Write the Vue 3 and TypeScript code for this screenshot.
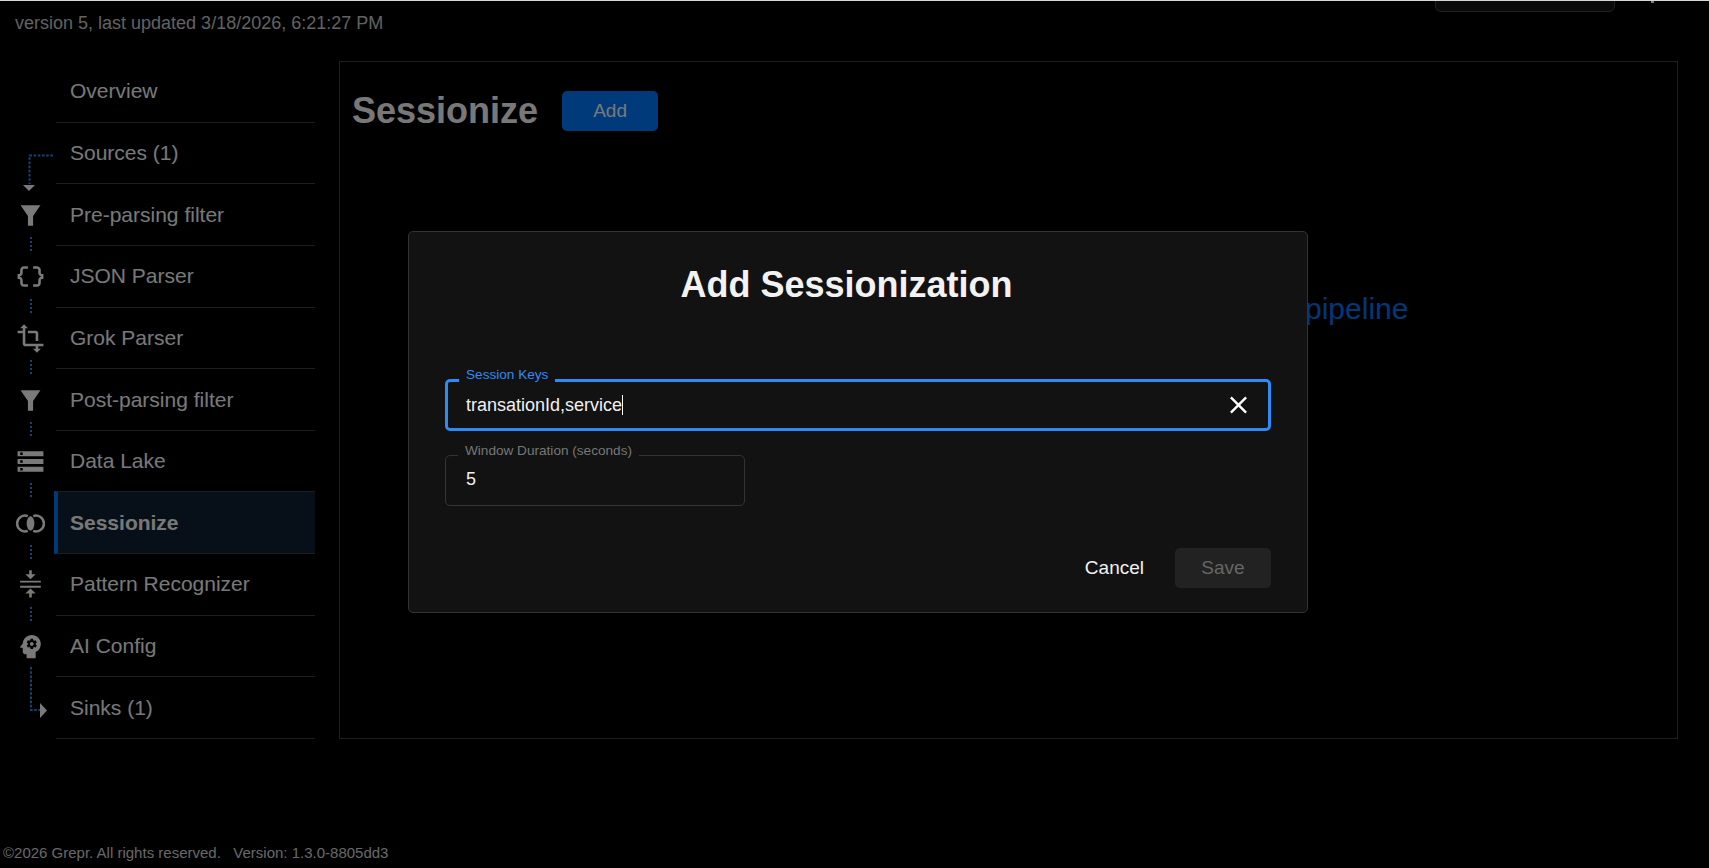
<script setup lang="ts">
interface Step {
  label: string
  icon?: string
  link?: boolean
  active?: boolean
}

const steps: Step[] = [
  { label: 'Overview' },
  { label: 'Sources (1)' },
  { label: 'Pre-parsing filter', icon: 'filter', link: true },
  { label: 'JSON Parser', icon: 'json', link: true },
  { label: 'Grok Parser', icon: 'transform', link: true },
  { label: 'Post-parsing filter', icon: 'filter', link: true },
  { label: 'Data Lake', icon: 'storage', link: true },
  { label: 'Sessionize', icon: 'join', link: true, active: true },
  { label: 'Pattern Recognizer', icon: 'compress', link: true },
  { label: 'AI Config', icon: 'psychology' },
  { label: 'Sinks (1)' },
]

const paths: Record<string, string> = {
  filter: 'M4.3 4H19.7L14 12.4V20H10V12.4Z',
  json: 'M4 7v2c0 .55-.45 1-1 1H2v4h1c.55 0 1 .45 1 1v2c0 1.65 1.35 3 3 3h3v-2H7c-.55 0-1-.45-1-1v-2c0-1.3-.84-2.42-2-2.83v-.34C5.16 11.42 6 10.3 6 9V7c0-.55.45-1 1-1h3V4H7C5.35 4 4 5.35 4 7zm17 3c-.55 0-1-.45-1-1V7c0-1.65-1.35-3-3-3h-3v2h3c.55 0 1 .45 1 1v2c0 1.3.84 2.42 2 2.83v.34c-1.16.41-2 1.52-2 2.83v2c0 .55-.45 1-1 1h-3v2h3c1.65 0 3-1.35 3-3v-2c0-.55.45-1 1-1h1v-4h-1z',
  transform: 'M22 18v-2H8V4h2L7 1 4 4h2v2H2v2h4v8c0 1.1.9 2 2 2h8v2h-2l3 3 3-3h-2v-2h4zM10 8h6v6h2V8c0-1.1-.9-2-2-2h-6v2z',
  storage: 'M2 20h20v-4H2v4zm2-3h2v2H4v-2zM2 4v4h20V4H2zm4 3H4V5h2v2zm-4 7h20v-4H2v4zm2-3h2v2H4v-2z',
  compress: 'M8 19h3v3h2v-3h3l-4-4-4 4zm8-15h-3V1h-2v3H8l4 4 4-4zM4 9v1.5h16V9H4zM4 13v1.5h16V13H4z',
  psychology: 'M13 8.57c-.79 0-1.43.64-1.43 1.43s.64 1.43 1.43 1.43 1.43-.64 1.43-1.43-.64-1.43-1.43-1.43zM13 3C9.25 3 6.2 5.94 6.02 9.64L4.1 12.2c-.25.33-.01.8.4.8H6v3c0 1.1.9 2 2 2h1v3h7v-4.68c2.36-1.12 4-3.53 4-6.32 0-3.87-3.13-7-7-7zm3 7c0 .13-.01.26-.02.39l.83.66c.08.06.1.16.05.25l-.8 1.39c-.05.09-.16.12-.24.09l-.99-.4c-.21.16-.43.29-.67.39L14 13.83c-.01.1-.1.17-.2.17h-1.6c-.1 0-.18-.07-.2-.17l-.15-1.06c-.25-.1-.47-.23-.68-.39l-.99.4c-.09.03-.2 0-.25-.09l-.8-1.39c-.05-.08-.03-.19.05-.25l.84-.66c-.01-.13-.02-.26-.02-.39s.02-.27.04-.39l-.85-.66c-.08-.06-.1-.16-.05-.26l.8-1.38c.05-.09.15-.12.24-.09l1 .4c.2-.15.43-.29.67-.39l.15-1.06c.02-.1.1-.17.2-.17h1.6c.1 0 .18.07.2.17l.15 1.06c.24.1.46.23.67.39l1-.4c.09-.03.2 0 .24.09l.8 1.38c.05.09.03.2-.05.26l-.85.66c.03.12.04.25.04.39z',
}
</script>

<template>
  <div class="page">
    <header class="top">
      <span class="version">version 5, last updated 3/18/2026, 6:21:27 PM</span>
      <div class="top-right">
        <div class="picker"></div>
        <span class="top-dot"></span>
      </div>
    </header>

    <main class="main">
      <nav class="side">
        <div
          v-for="step in steps"
          :key="step.label"
          class="row"
          :class="{ active: step.active }"
        >
          <div class="rail">
            <svg v-if="step.icon === 'join'" class="icon" viewBox="0 0 24 24">
              <ellipse cx="12" cy="12" rx="3" ry="5.6" class="solid" />
              <path d="M9.9 6.3A6.1 6.1 0 1 0 9.9 17.7M14.1 6.3A6.1 6.1 0 1 1 14.1 17.7" class="ring" />
            </svg>
            <svg v-else-if="step.icon" class="icon" viewBox="0 0 24 24">
              <path :d="paths[step.icon]" class="solid" fill-rule="evenodd" />
            </svg>
            <span v-if="step.link" class="link"></span>
            <svg v-if="step.label === 'Sources (1)'" class="wire wire-in" viewBox="0 0 30 40">
              <path d="M29 1.5H5.5V30" class="dash" />
              <path d="M-1 31H11L5 37Z" class="solid" />
            </svg>
            <svg v-if="step.label === 'AI Config'" class="wire wire-out" viewBox="0 0 20 56">
              <path d="M2 0V43H11" class="dash" />
              <path d="M11 36L18 43.5L11 51Z" class="solid" />
            </svg>
          </div>
          <div class="label">{{ step.label }}</div>
        </div>
      </nav>

      <section class="panel">
        <div class="panel-head">
          <h1 class="panel-title">Sessionize</h1>
          <button class="add" type="button">Add</button>
        </div>
        <p class="empty">pipeline</p>
      </section>
    </main>

    <footer class="foot">©2026 Grepr. All rights reserved.&nbsp;&nbsp; Version: 1.3.0-8805dd3</footer>

    <div class="overlay">
      <div class="dialog">
        <h2 class="dialog-title">Add Sessionization</h2>

        <div class="field focused">
          <span class="field-label">Session Keys</span>
          <span class="field-value">transationId,service<i class="caret"></i></span>
          <svg class="clear" viewBox="0 0 24 24">
            <path d="M19 6.41L17.59 5 12 10.59 6.41 5 5 6.41 10.59 12 5 17.59 6.41 19 12 13.41 17.59 19 19 17.59 13.41 12z" />
          </svg>
        </div>

        <div class="field short">
          <span class="field-label">Window Duration (seconds)</span>
          <span class="field-value">5</span>
        </div>

        <div class="actions">
          <button class="cancel" type="button">Cancel</button>
          <button class="save" type="button" disabled>Save</button>
        </div>
      </div>
    </div>
  </div>
</template>

<style>
html,
body {
  margin: 0;
  background: #000;
}
</style>

<style scoped>
.page {
  position: relative;
  height: 868px;
  overflow: hidden;
  box-sizing: border-box;
  border-top: 1px solid #d8d8d8;
  background: #000;
  font-family: 'Liberation Sans', Arial, sans-serif;
  color: #f0f0f0;
}

.top {
  height: 60px;
  display: flex;
  justify-content: space-between;
  align-items: flex-start;
  padding-left: 15px;
  padding-right: 55px;
}

.version {
  margin-top: 12px;
  font-size: 18px;
  line-height: 20px;
  color: #c4c4c4;
}

.top-right {
  display: flex;
  gap: 36px;
}

.picker {
  width: 178px;
  height: 30px;
  margin-top: -21px;
  border: 1px solid #444;
  border-radius: 6px;
  background: #141414;
}

.top-dot {
  width: 3px;
  height: 2px;
  background: #fff;
}

.main {
  display: flex;
  gap: 24px;
  padding-right: 31px;
}

.side {
  width: 315px;
  flex: none;
}

.row {
  display: flex;
  height: 61.65px;
}

.rail {
  position: relative;
  width: 56px;
  flex: none;
  display: flex;
  align-items: center;
  justify-content: center;
  padding-left: 4px;
  box-sizing: border-box;
}

.icon {
  width: 31px;
  height: 31px;
}

.solid {
  fill: #f4f4f4;
}

.ring {
  fill: none;
  stroke: #f4f4f4;
  stroke-width: 1.9;
}

.link {
  position: absolute;
  left: 30px;
  bottom: -6px;
  width: 2px;
  height: 15px;
  background: repeating-linear-gradient(to bottom, #3a80e6 0 2.4px, transparent 2.4px 4px);
}

.wire {
  position: absolute;
  overflow: visible;
}

.wire-in {
  left: 24px;
  top: 31px;
  width: 30px;
  height: 40px;
}

.wire-out {
  left: 29px;
  top: 51px;
  width: 20px;
  height: 56px;
}

.dash {
  fill: none;
  stroke: #3a80e6;
  stroke-width: 2;
  stroke-dasharray: 2.6 1.6;
}

.label {
  flex: 1;
  display: flex;
  align-items: center;
  padding-left: 14px;
  border-bottom: 1px solid #3c3c3c;
  font-size: 21px;
}

.row.active .label {
  border-left: 4px solid #0072f0;
  border-top: 1px solid #3c3c3c;
  margin-top: -1px;
  margin-left: -2px;
  padding-left: 12px;
  background: #0f2132;
  font-weight: 700;
}

.panel {
  flex: 1;
  height: 678px;
  border: 1px solid #3c3c3c;
  box-sizing: border-box;
  padding: 29px 12px 0;
}

.panel-head {
  display: flex;
  align-items: center;
  gap: 24px;
}

.panel-title {
  margin: 0;
  font-size: 36px;
  line-height: 40px;
  font-weight: 700;
}

.add {
  width: 96px;
  height: 40px;
  border: 0;
  border-radius: 5px;
  background: #0074f5;
  color: #f0f0f0;
  font: 19px 'Liberation Sans', Arial, sans-serif;
}

.empty {
  margin: 161px 0 0 953px;
  font-size: 30px;
  line-height: 34px;
  color: #0070f0;
}

.foot {
  margin-top: 104px;
  padding-left: 3px;
  font-size: 15px;
  line-height: 20px;
  color: #d0d0d0;
}

.overlay {
  position: absolute;
  inset: 0;
  padding: 230px 0 0 408px;
  background: rgba(0, 0, 0, 0.5);
}

.dialog {
  width: 900px;
  height: 382px;
  box-sizing: border-box;
  padding: 33px 36px 24px;
  background: #121212;
  border: 1px solid #333;
  border-radius: 5px;
  display: flex;
  flex-direction: column;
}

.dialog-title {
  margin: 0 0 74px;
  padding-right: 23px;
  text-align: center;
  font-size: 36px;
  line-height: 40px;
  font-weight: 700;
  color: #f2f2f2;
}

.field {
  position: relative;
  height: 51px;
  box-sizing: border-box;
  display: flex;
  align-items: center;
  padding: 0 20px 2px;
  border: 1px solid #333;
  border-radius: 5px;
}

.field.focused {
  height: 52px;
  margin-bottom: 24px;
  border: 3px solid #2e8bf5;
  padding: 0 18px;
}

.field.short {
  width: 300px;
}

.field-label {
  position: absolute;
  left: 12px;
  top: -13px;
  padding: 0 7px;
  background: #121212;
  font-size: 13.6px;
  line-height: 16px;
  color: #777;
}

.focused .field-label {
  left: 11px;
  top: -15px;
  color: #2e8bf5;
}

.field-value {
  font-size: 18px;
  color: #f0f0f0;
}

.caret {
  display: inline-block;
  width: 1px;
  height: 20px;
  margin-left: 0;
  vertical-align: -4px;
  background: #fff;
}

.clear {
  position: absolute;
  right: 15px;
  top: 50%;
  width: 29px;
  height: 29px;
  transform: translateY(-50%);
  fill: #fff;
}

.actions {
  margin-top: auto;
  display: flex;
  justify-content: flex-end;
  align-items: center;
  gap: 31px;
}

.cancel,
.save {
  border: 0;
  font: 19px 'Liberation Sans', Arial, sans-serif;
}

.cancel {
  padding: 0;
  background: none;
  color: #f2f2f2;
}

.save {
  width: 96px;
  height: 40px;
  border-radius: 5px;
  background: #222;
  color: #666;
}
</style>
